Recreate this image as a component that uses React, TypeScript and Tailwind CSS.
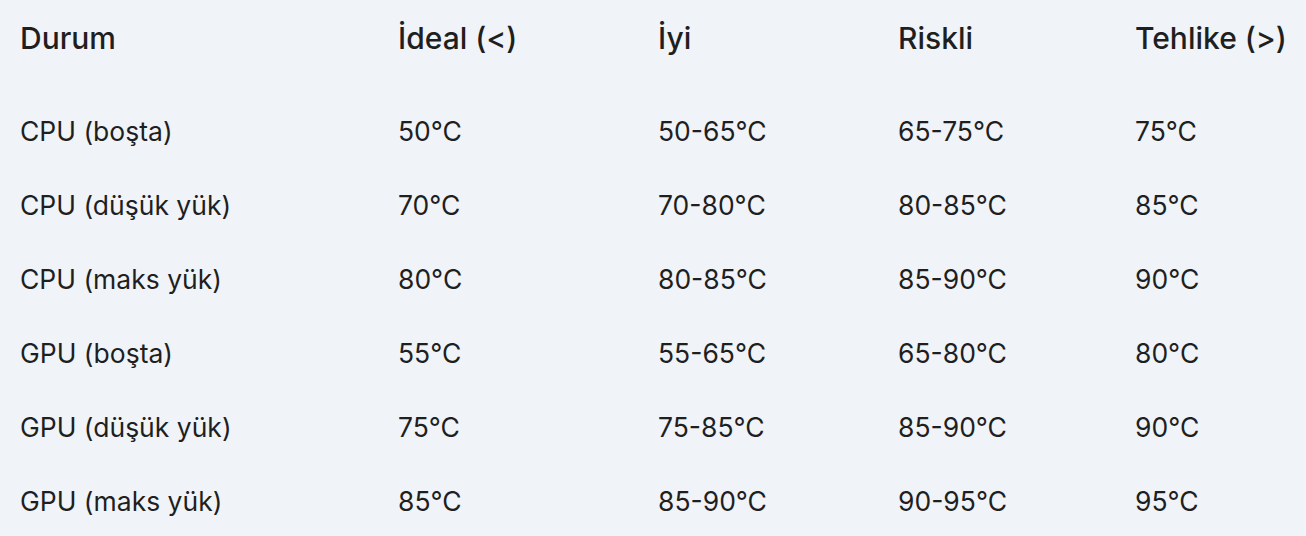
import React from "react";

const header = ["Durum", "İdeal (<)", "İyi", "Riskli", "Tehlike (>)"];
const rows = [
  ["CPU (boşta)", "50°C", "50-65°C", "65-75°C", "75°C"],
  ["CPU (düşük yük)", "70°C", "70-80°C", "80-85°C", "85°C"],
  ["CPU (maks yük)", "80°C", "80-85°C", "85-90°C", "90°C"],
  ["GPU (boşta)", "55°C", "55-65°C", "65-80°C", "80°C"],
  ["GPU (düşük yük)", "75°C", "75-85°C", "85-90°C", "90°C"],
  ["GPU (maks yük)", "85°C", "85-90°C", "90-95°C", "95°C"],
];

export default function App() {
  return (
    <div
      className="w-[1306px] h-[536px] bg-[#f0f4f9] text-[#1f1f1f] overflow-hidden pl-[20px]"
      style={{ fontFamily: "Inter, Roboto, sans-serif" }}
    >
      <div className="grid grid-cols-[378px_260px_240px_237px_1fr] h-[76px] items-center text-[30px] font-medium">
        {header.map((h) => (
          <div key={h} className="whitespace-nowrap">{h}</div>
        ))}
      </div>
      <div className="pt-[19px]">
        {rows.map((r, i) => (
          <div
            key={i}
            className="grid grid-cols-[378px_260px_240px_237px_1fr] h-[74px] items-center text-[26.5px]"
          >
            {r.map((c, j) => (
              <div key={j} className="whitespace-nowrap">{c}</div>
            ))}
          </div>
        ))}
      </div>
    </div>
  );
}
